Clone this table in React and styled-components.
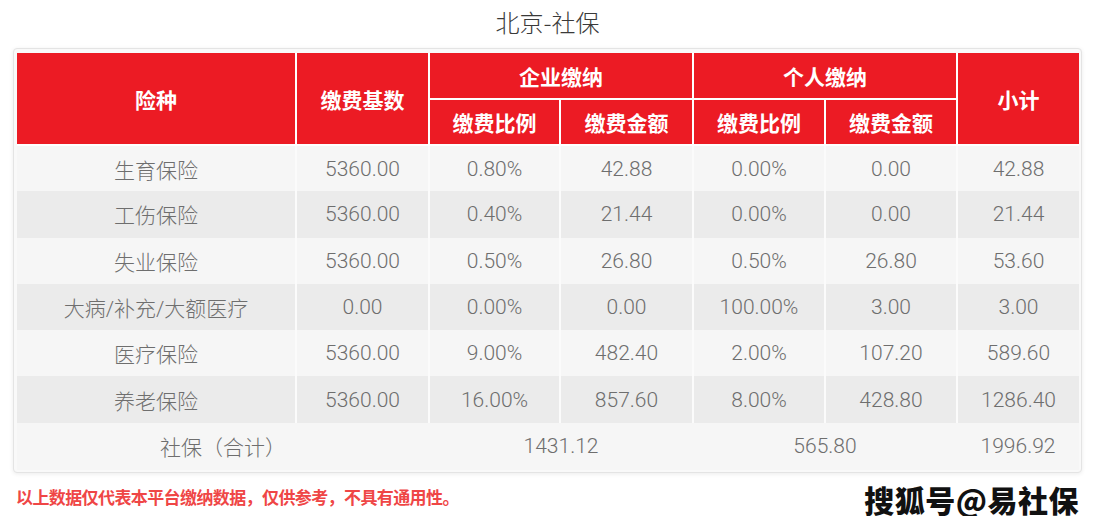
import React from 'react';
import styled, { createGlobalStyle } from 'styled-components';

const GlobalStyle = createGlobalStyle`
  body {
    margin: 0;
    background: #fff;
    font-family: "Liberation Sans", "Noto Sans CJK SC", sans-serif;
  }
`;

const Page = styled.div`
  width: 1069px;
  margin-left: 13px;
  display: flex;
  flex-direction: column;
`;

const Title = styled.div`
  height: 48px;
  display: flex;
  align-items: center;
  justify-content: center;
  padding-bottom: 5px;
  box-sizing: border-box;
  font-family: "Noto Sans CJK SC", sans-serif;
  font-size: 24px;
  color: #3a3a3a;
  font-weight: 300;
`;

const Card = styled.div`
  background: #f9f9f9;
  border: 1px solid #e4e4e4;
  border-radius: 4px;
  box-shadow: 0 1px 4px rgba(0, 0, 0, 0.08);
  padding: 4px 2px 2px 3px;
`;

const Table = styled.table`
  width: 1062px;
  table-layout: fixed;
  border-collapse: collapse;
  border-spacing: 0;
`;

const Head = styled.th`
  background: #ec1b24;
  color: #fff;
  font-family: "Noto Sans CJK SC", sans-serif;
  font-size: 21px;
  font-weight: 700;
  text-align: center;
  padding: 0;
  border: 2px solid #fff;
  &:first-child { border-left: none; }
  &:last-child { border-right: none; }
`;

const HeadRow = styled.tr`
  height: 46px;
  &:first-child th { border-top: none; }
`;

const Row = styled.tr`
  height: ${(p) => (p.$total ? '47px' : '46.3px')};
  background: ${(p) => (p.$shade ? '#ebebeb' : '#f6f6f6')};
`;

const Cell = styled.td`
  padding: 0;
  text-align: center;
  font-family: "Roboto", "Noto Sans CJK SC", sans-serif;
  font-size: 21px;
  font-weight: 300;
  color: #6e6e6e;
  border-left: ${(p) => (p.$plain ? 'none' : '2px solid #fbfbfb')};
  &:first-child { border-left: none; }
`;

const Footer = styled.div`
  display: flex;
  justify-content: space-between;
  align-items: flex-start;
  margin-top: 9px;
`;

const Note = styled.div`
  padding-left: 3px;
  padding-top: 2px;
  font-family: "Noto Sans CJK SC", sans-serif;
  font-size: 17px;
  font-weight: 700;
  color: #ef4646;
  letter-spacing: -0.6px;
`;

const Watermark = styled.div`
  font-family: "Noto Sans CJK SC", sans-serif;
  font-size: 30px;
  font-weight: 900;
  color: #111;
  line-height: 34px;
  margin-right: 3px;
  letter-spacing: 0.5px;
`;

const rows = [
  ['生育保险', '5360.00', '0.80%', '42.88', '0.00%', '0.00', '42.88'],
  ['工伤保险', '5360.00', '0.40%', '21.44', '0.00%', '0.00', '21.44'],
  ['失业保险', '5360.00', '0.50%', '26.80', '0.50%', '26.80', '53.60'],
  ['大病/补充/大额医疗', '0.00', '0.00%', '0.00', '100.00%', '3.00', '3.00'],
  ['医疗保险', '5360.00', '9.00%', '482.40', '2.00%', '107.20', '589.60'],
  ['养老保险', '5360.00', '16.00%', '857.60', '8.00%', '428.80', '1286.40'],
];

const widths = [279, 133, 131, 133, 132, 132, 122];

export default function App() {
  return (
    <>
      <GlobalStyle />
      <Page>
        <Title>北京-社保</Title>
        <Card>
          <Table>
            <colgroup>
              {widths.map((w, i) => (
                <col key={i} style={{ width: w }} />
              ))}
            </colgroup>
            <thead>
              <HeadRow>
                <Head rowSpan={2}>险种</Head>
                <Head rowSpan={2}>缴费基数</Head>
                <Head colSpan={2}>企业缴纳</Head>
                <Head colSpan={2}>个人缴纳</Head>
                <Head rowSpan={2}>小计</Head>
              </HeadRow>
              <HeadRow>
                <Head>缴费比例</Head>
                <Head>缴费金额</Head>
                <Head>缴费比例</Head>
                <Head>缴费金额</Head>
              </HeadRow>
            </thead>
            <tbody>
              {rows.map((r, i) => (
                <Row key={r[0]} $shade={i % 2 === 1}>
                  {r.map((v, j) => (
                    <Cell key={j}>{v}</Cell>
                  ))}
                </Row>
              ))}
              <Row $total>
                <Cell colSpan={2} $plain>社保（合计）</Cell>
                <Cell colSpan={2} $plain>1431.12</Cell>
                <Cell colSpan={2} $plain>565.80</Cell>
                <Cell $plain>1996.92</Cell>
              </Row>
            </tbody>
          </Table>
        </Card>
        <Footer>
          <Note>以上数据仅代表本平台缴纳数据，仅供参考，不具有通用性。</Note>
          <Watermark>搜狐号@易社保</Watermark>
        </Footer>
      </Page>
    </>
  );
}
